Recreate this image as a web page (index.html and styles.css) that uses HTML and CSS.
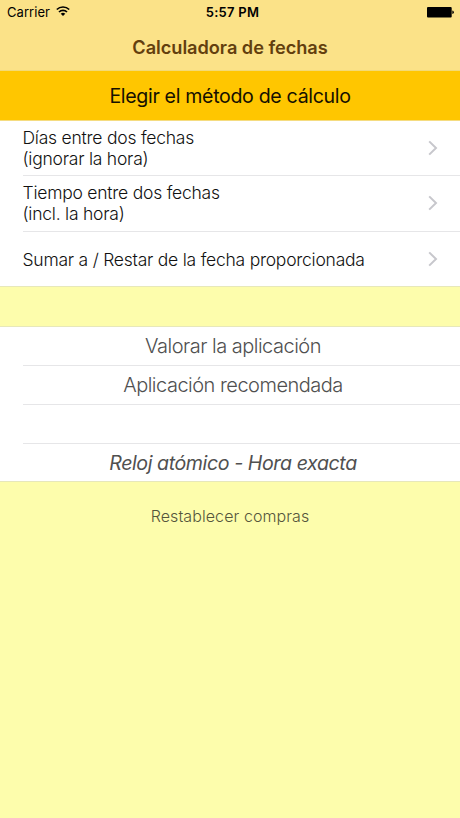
FILE: index.html
```html
<!DOCTYPE html>
<html lang="es">
<head>
<meta charset="utf-8">
<title>Calculadora de fechas</title>
<link rel="stylesheet" href="styles.css">
</head>
<body>
<header class="navbar">
  <div class="status">
    <div class="carrier"><span>Carrier</span>
      <svg class="wifi" width="14" height="11" viewBox="0 0 14 11"><g fill="none" stroke="#000" stroke-width="1.7"><path d="M.8 3.5A8.9 8.9 0 0 1 13.2 3.5"/><path d="M3 6A5.7 5.7 0 0 1 11 6"/></g><path d="M4.7 7.7A3.4 3.4 0 0 1 9.3 7.7L7 10.1Z"/></svg>
    </div>
    <span class="time">5:57 PM</span>
    <svg class="battery" width="27" height="11" viewBox="0 0 27 11"><rect width="24.7" height="10.6" rx="1"/><path d="M25.3 3.5Q26.8 3.8 26.8 5.3T25.3 7.1Z"/></svg>
  </div>
  <h1 class="title">Calculadora de fechas</h1>
</header>
<h2 class="section">Elegir el método de cálculo</h2>
<main>
  <ul class="list methods">
    <li class="row"><div class="label">Días entre dos fechas<br>(ignorar la hora)</div><svg class="chevron" width="10" height="16" viewBox="0 0 10 16"><path d="M1.2 1.4 8 8 1.2 14.6"/></svg></li>
    <li class="row"><div class="label">Tiempo entre dos fechas<br>(incl. la hora)</div><svg class="chevron" width="10" height="16" viewBox="0 0 10 16"><path d="M1.2 1.4 8 8 1.2 14.6"/></svg></li>
    <li class="row"><div class="label">Sumar a / Restar de la fecha proporcionada</div><svg class="chevron" width="10" height="16" viewBox="0 0 10 16"><path d="M1.2 1.4 8 8 1.2 14.6"/></svg></li>
  </ul>
  <ul class="list links">
    <li class="row">Valorar la aplicación</li>
    <li class="row">Aplicación recomendada</li>
    <li class="row"></li>
    <li class="row"><em class="clock">Reloj atómico - Hora exacta</em></li>
  </ul>
  <div class="restore">Restablecer compras</div>
</main>
</body>
</html>
```
FILE: styles.css
```css
* { box-sizing: border-box; }
body {
  margin: 0;
  min-height: 818px;
  background: #fdfdac;
  color: #111;
  font-family: Inter, "Liberation Sans", sans-serif;
  font-weight: 300;
  white-space: nowrap;
}
svg { display: block; flex: none; }
.navbar { height: 71px; background: #fbe288; border-bottom: 1px solid #f3da75; }
.status {
  display: grid;
  grid-template-columns: 1fr auto 1fr;
  align-items: center;
  height: 24px;
  padding: 0 6px 0 7px;
  color: #000;
  font-size: 13px;
}
.carrier { display: flex; align-items: center; gap: 6px; font-weight: 400; letter-spacing: .05px; }
.wifi { margin-top: -1px; }
.time { padding-left: 4px; font-weight: 600; font-size: 13px; letter-spacing: .25px; }
.battery { justify-self: end; }
.title {
  margin: 0;
  height: 46px;
  line-height: 46px;
  text-align: center;
  font-size: 18.2px;
  font-weight: 600;
  letter-spacing: -.04px;
  color: #633f0e;
}
.section {
  margin: 0;
  height: 50px;
  line-height: 50px;
  text-align: center;
  font-size: 19.6px;
  font-weight: 400;
  letter-spacing: -.34px;
  color: #151000;
  background: #ffc600;
  border-bottom: 1px solid #f5dc80;
}
.list {
  margin: 0;
  padding: 0 0 0 23px;
  list-style: none;
  background: #fff;
}
.row { display: flex; align-items: center; }
.row + .row { border-top: 1px solid #e6e6e8; }
.methods { height: 166px; border-bottom: 1px solid #e7e8ba; }
.methods .row { height: 55px; padding-right: 22px; justify-content: space-between; }
.methods .row:first-child { height: 54px; padding-bottom: 1px; }
.methods .row:nth-child(2) { height: 56px; padding-bottom: 2px; }
.label { margin-left: -.5px; font-size: 17.5px; line-height: 21px; letter-spacing: -.23px; }
.chevron { fill: none; stroke: #c7c7cc; stroke-width: 2; }
.links { margin-top: 39px; height: 156px; border-top: 1px solid #e7e8ba; border-bottom: 1px solid #e7e8ba; }
.links .row {
  height: 39px;
  padding-right: 17px;
  justify-content: center;
  font-size: 20px;
  letter-spacing: -.5px;
  color: #505050;
}
.links .row:first-child { height: 38px; }
.links .row:last-child { padding-bottom: 1px; }
.links .clock { font-size: 19.6px; font-weight: 400; letter-spacing: -.42px; color: #505050; }
.restore {
  height: 68px;
  line-height: 68px;
  text-align: center;
  font-size: 16px;
  letter-spacing: .08px;
  color: #55553c;
}
```
